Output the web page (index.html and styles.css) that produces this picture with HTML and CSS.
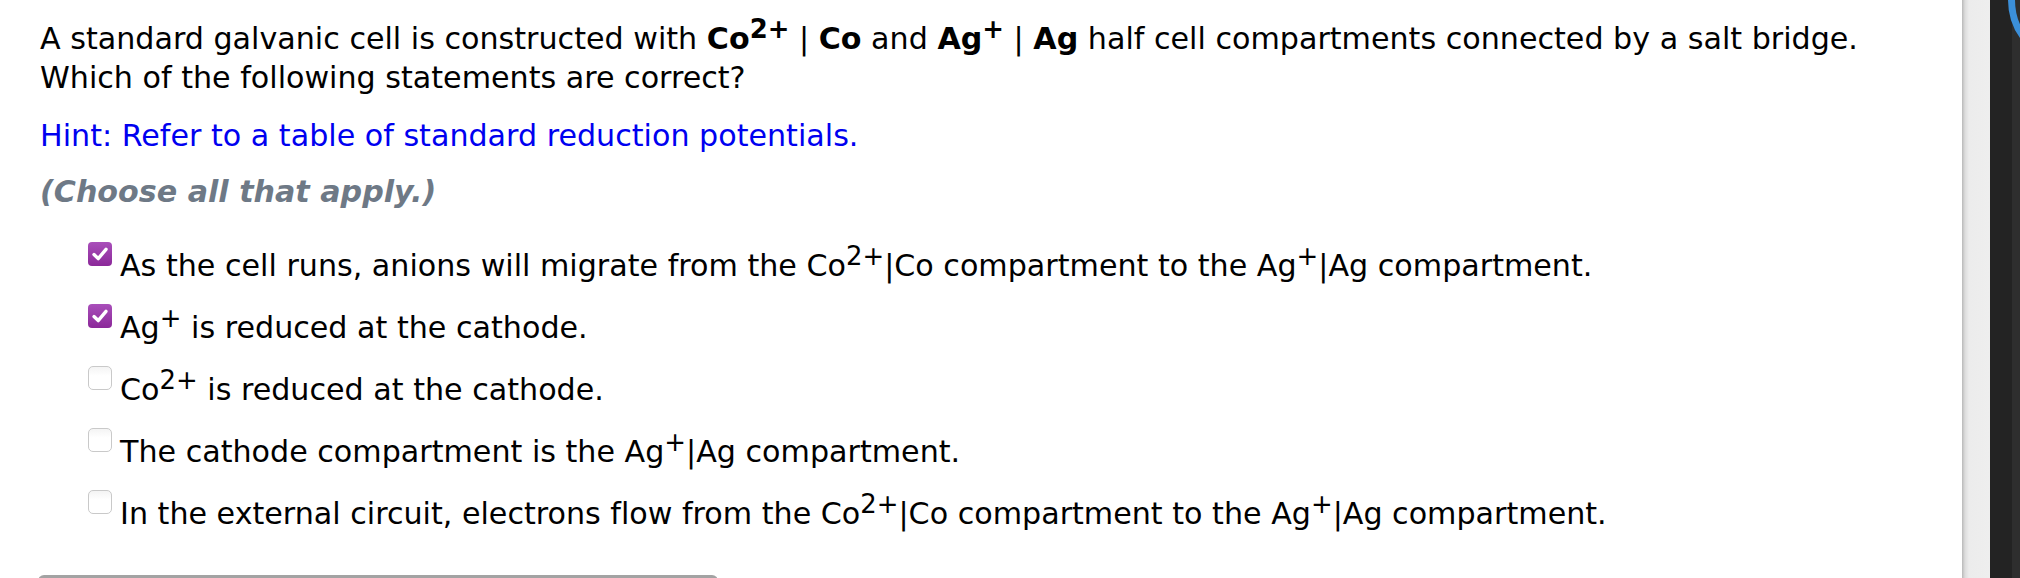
FILE: index.html
```html
<!DOCTYPE html>
<html lang="en">
<head>
<meta charset="utf-8">
<title>Galvanic cell question</title>
<link rel="stylesheet" href="styles.css">
</head>
<body>
<div class="page">
  <main class="content">
    <p class="question">A standard galvanic cell is constructed with <b>Co<sup>2+</sup></b> | <b>Co</b> and <b>Ag<sup>+</sup></b> | <b>Ag</b> half cell compartments connected by a salt bridge.<br>Which of the following statements are correct?</p>
    <p class="hint">Hint: Refer to a table of standard reduction potentials.</p>
    <p class="instr">(Choose all that apply.)</p>
    <ul class="options">
      <li class="option"><span class="box checked"><svg viewBox="0 0 24 24" width="24" height="24"><path d="M6 12.6 L10.2 16.6 L18 7.4" fill="none" stroke="#fff" stroke-width="3.4" stroke-linecap="round" stroke-linejoin="round"/></svg></span><span class="label">As the cell runs, anions will migrate from the Co<sup>2+</sup>|Co compartment to the Ag<sup>+</sup>|Ag compartment.</span></li>
      <li class="option"><span class="box checked"><svg viewBox="0 0 24 24" width="24" height="24"><path d="M6 12.6 L10.2 16.6 L18 7.4" fill="none" stroke="#fff" stroke-width="3.4" stroke-linecap="round" stroke-linejoin="round"/></svg></span><span class="label">Ag<sup>+</sup> is reduced at the cathode.</span></li>
      <li class="option"><span class="box"></span><span class="label">Co<sup>2+</sup> is reduced at the cathode.</span></li>
      <li class="option"><span class="box"></span><span class="label">The cathode compartment is the Ag<sup>+</sup>|Ag compartment.</span></li>
      <li class="option"><span class="box"></span><span class="label">In the external circuit, electrons flow from the Co<sup>2+</sup>|Co compartment to the Ag<sup>+</sup>|Ag compartment.</span></li>
    </ul>
    <div class="next-box"></div>
  </main>
  <div class="scrollbar"></div>
  <div class="dark-strip"><span class="ring"></span></div>
</div>
</body>
</html>
```

FILE: styles.css
```css
html, body {
  margin: 0;
  padding: 0;
  height: 578px;
  overflow: hidden;
  background: #fff;
}

.page {
  display: flex;
  height: 578px;
  font-family: "DejaVu Sans", Verdana, sans-serif;
  font-size: 30.15px;
  font-variant-ligatures: none;
  color: #000;
}

.content {
  flex: 1;
  padding: 19px 0 0 40px;
  overflow: hidden;
}

p {
  margin: 0;
  line-height: 39px;
}

sup {
  line-height: 0;
  font-size: 0.86em;
  vertical-align: 0.42em;
}

.hint {
  margin-top: 19px;
  color: #0000f0;
}

.instr {
  margin-top: 17px;
  color: #6e7986;
  font-weight: bold;
  font-style: italic;
}

.options {
  list-style: none;
  margin: 35px 0 0 0;
  padding: 0 0 0 48px;
}

.option {
  display: flex;
  align-items: flex-start;
  line-height: 39px;
  height: 39px;
  margin-bottom: 23px;
}

.option:last-child {
  margin-bottom: 0;
}

.box {
  flex: none;
  width: 24px;
  height: 24px;
  margin-top: -4px;
  margin-right: 8px;
  box-sizing: border-box;
  border: 1px solid #c9c9c9;
  border-radius: 5px;
  background: linear-gradient(#f4f4f4, #ffffff 40%);
}

.box.checked {
  border: none;
  border-radius: 4px;
  background: linear-gradient(#a94fba, #8b2899);
}

.box svg {
  display: block;
}

.next-box {
  margin: 42px 0 0 -2px;
  width: 680px;
  height: 10px;
  border-top: 3px solid #a3a3a3;
  border-radius: 6px 6px 0 0;
}

.scrollbar {
  flex: none;
  width: 28px;
  background: linear-gradient(to right, #b9b9b9, #dcdcdc 3px, #ececec 7px, #eeeeee);
}

.dark-strip {
  flex: none;
  width: 30px;
  position: relative;
  overflow: hidden;
  background: linear-gradient(to right, #232323 22px, #2e2e2e 22px);
}

.ring {
  position: absolute;
  left: 18px;
  top: -66px;
  width: 132px;
  height: 132px;
  box-sizing: border-box;
  border: 7px solid #3b8fd9;
  border-radius: 50%;
}
```
